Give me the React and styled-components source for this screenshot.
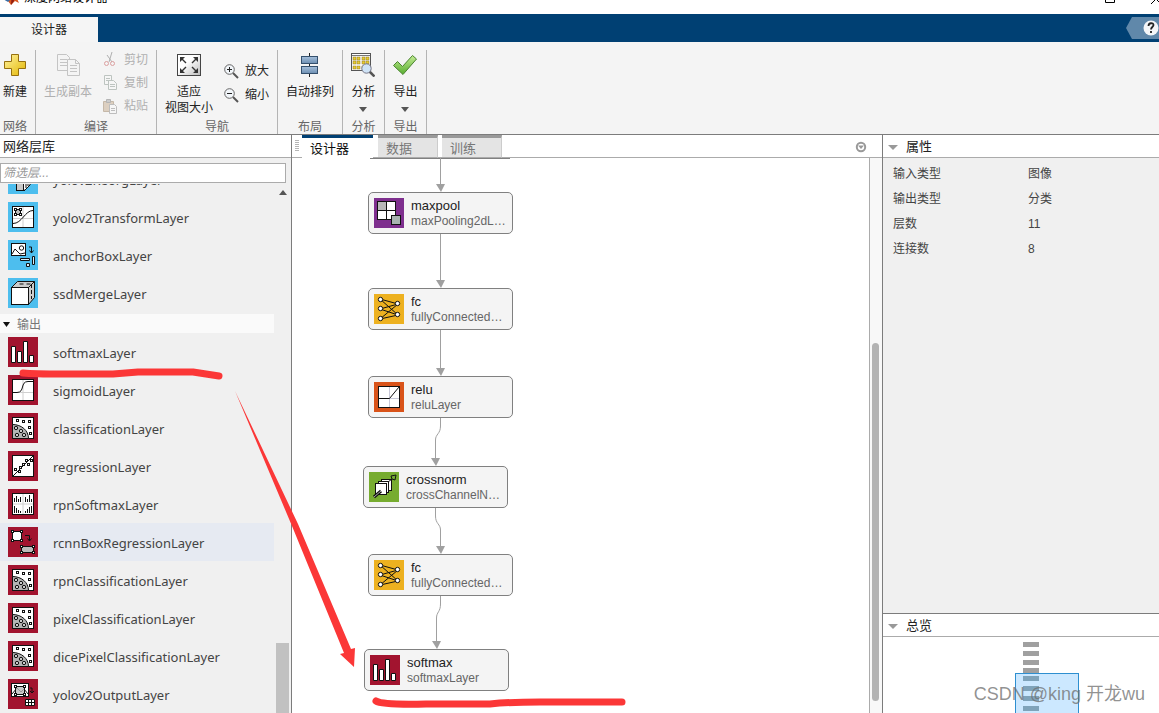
import React from "react";
import styled, { createGlobalStyle } from "styled-components";

const cjk = `"Noto Sans CJK SC"`;
const uiFont = `"Liberation Sans", ${cjk}, sans-serif`;

const GlobalStyle = createGlobalStyle`
  * { box-sizing: border-box; }
  body { margin: 0; background: #fff; font-family: ${uiFont}; font-size: 12px; line-height: 16px; color: #222; }
  button, input { font: inherit; color: inherit; }
  button { border: 0; padding: 0; margin: 0; background: none; cursor: pointer; }
  svg { display: block; flex: none; }
  h1, h2, p, ul { margin: 0; padding: 0; font-size: inherit; font-weight: inherit; list-style: none; }
`;

const Window = styled.div`
  position: relative;
  height: 100vh;
  display: flex;
  flex-direction: column;
  overflow: hidden;
`;

/* ---------- title bar and ribbon ---------- */

const TitleBar = styled.header`
  height: 14px;
  flex: none;
  overflow: hidden;
  background: #fff;
`;

const TitleRow = styled.div`
  display: flex;
  align-items: center;
  gap: 5px;
  height: 16px;
  margin-top: -10px;
  padding-left: 3px;
  color: #000;
`;

const WindowControls = styled.div`
  display: flex;
  margin-left: auto;
  overflow: hidden;
`;

const RibbonTabs = styled.div`
  display: flex;
  align-items: flex-start;
  justify-content: space-between;
  flex: none;
  height: 28px;
  padding-top: 3px;
  background: #004073;
`;

const RibbonTab = styled.button`
  width: 98px;
  height: 25px;
  background: #f5f5f5;
  color: #222;
`;

const Ribbon = styled.div`
  display: flex;
  flex: none;
  height: 93px;
  background: #f4f4f4;
  border-bottom: 1px solid #7c7c7c;
`;

const Group = styled.section`
  display: flex;
  flex-direction: column;
  width: ${(p) => p.$width}px;
  padding-right: ${(p) => (p.$first ? 5 : 0)}px;
`;

const Separator = styled.div`
  width: 1px;
  margin-top: 8px;
  background: #b4b4b4;
`;

const GroupBody = styled.div`
  display: flex;
  justify-content: center;
  gap: ${(p) => p.$gap || 0}px;
  height: 76px;
`;

const GroupName = styled.h2`
  height: 16px;
  line-height: 19px;
  text-align: center;
  color: #666;
  overflow: hidden;
`;

const BigButton = styled.button`
  display: flex;
  flex-direction: column;
  align-items: center;
  padding-top: 11px;
  gap: 7px;
  white-space: pre-line;
  color: #222;
  &:disabled { color: #b0b0b0; }
`;

const SmallColumn = styled.div`
  display: flex;
  flex-direction: column;
  padding-top: ${(p) => p.$top}px;
`;

const SmallButton = styled.button`
  display: flex;
  align-items: center;
  gap: 6px;
  height: 24px;
  color: #222;
  &:disabled { color: #b0b0b0; }
`;

/* ---------- main area ---------- */

const Main = styled.main`
  display: grid;
  grid-template-columns: 292px minmax(0, 1fr) 276px;
  flex: 1;
  min-height: 0;
`;

const Panel = styled.section`
  display: flex;
  flex-direction: column;
  min-height: 0;
  min-width: 0;
  background: #f0f0f0;
  border-right: ${(p) => (p.$edge ? "1px solid #7c7c7c" : "0")};
`;

const PanelHeader = styled.h2`
  display: flex;
  align-items: center;
  gap: 8px;
  flex: none;
  height: 23px;
  padding: 2px 0 0 ${(p) => p.$indent}px;
  background: #fff;
  border-bottom: 1px solid #ababab;
  font-size: 13px;
  color: #222;
`;

const Filter = styled.input`
  flex: none;
  height: 20px;
  margin: 5px 5px 1px 0;
  padding: 0 2px;
  border: 1px solid #ababab;
  background: #fff;
  outline: 0;
  font-size: 12px;
  &::placeholder { color: #999; font-style: italic; opacity: 1; }
`;

const Library = styled.div`
  display: flex;
  flex: 1;
  min-height: 0;
  overflow: hidden;
`;

const LayerList = styled.ul`
  flex: 1;
  margin-top: -24px;
`;

const LayerRow = styled.button`
  display: flex;
  align-items: center;
  gap: 15px;
  width: 100%;
  height: 38px;
  padding-left: 8px;
  background: ${(p) => (p.$hover ? "#e6eaf2" : "transparent")};
  font-family: "Noto Sans", ${cjk}, sans-serif;
  font-size: 13px;
  color: #444;
  text-align: left;
`;

const LayerName = styled.span`
  padding-top: 2px;
`;

const CategoryRow = styled.button`
  display: flex;
  align-items: center;
  gap: 7px;
  width: 100%;
  height: 21px;
  padding: 2px 0 0 3px;
  background: #fafafa;
  border-top: 2px solid #f0f0f0;
  color: #777;
`;

const ListScroll = styled.div`
  display: flex;
  flex-direction: column;
  justify-content: space-between;
  align-items: center;
  flex: none;
  width: 17px;
  padding: 6px 2px 0;
`;

const ListThumb = styled.div`
  align-self: stretch;
  height: 70px;
  background: #c1c1c1;
`;

/* ---------- designer ---------- */

const TabBar = styled.div`
  display: flex;
  flex: none;
  height: 23px;
  background: linear-gradient(#ababab, #ababab) bottom / 100% 1px no-repeat, #fff;
`;

const Grip = styled.div`
  width: 10px;
  padding: 5px 0 0 3px;
`;

const DocTab = styled.button`
  width: ${(p) => (p.$active ? 71 : 60)}px;
  margin-right: ${(p) => (p.$active ? 5 : 4)}px;
  padding: 2px 8px 0;
  border-top: 3px solid ${(p) => (p.$active ? "#004073" : "#999")};
  border-right: ${(p) => (p.$active ? "0" : "1px solid #ccc")};
  border-bottom: ${(p) => (p.$active ? "0" : "1px solid #ababab")};
  background: ${(p) => (p.$active ? "#fff" : "#e4e4e4")};
  color: ${(p) => (p.$active ? "#111" : "#777")};
  font-size: 13px;
  text-align: left;
  white-space: nowrap;
`;

const TabMenu = styled.button`
  margin: 0 15px 0 auto;
`;

const CanvasRow = styled.div`
  display: flex;
  flex: 1;
  min-height: 0;
`;

const Canvas = styled.div`
  position: relative;
  flex: 1;
  overflow: hidden;
  background: #fff;
`;

const Wires = styled.svg`
  position: absolute;
  left: 0;
  top: 0;
`;

const Node = styled.button`
  position: absolute;
  left: ${(p) => p.$x}px;
  top: ${(p) => p.$y}px;
  display: flex;
  align-items: center;
  gap: 7px;
  width: 145px;
  height: 42px;
  padding: 0 6px 0 5px;
  border: 1px solid #808080;
  border-radius: 5px;
  background: #f4f4f4;
  text-align: left;
`;

const NodeText = styled.span`
  display: flex;
  flex-direction: column;
  min-width: 0;
  padding-top: 1px;
`;

const NodeName = styled.span`
  font-size: 13px;
  line-height: 15px;
  color: #222;
`;

const NodeType = styled.span`
  font-size: 12px;
  line-height: 16px;
  color: #666;
  white-space: nowrap;
`;

const CanvasScroll = styled.div`
  display: flex;
  flex-direction: column;
  justify-content: flex-end;
  width: 13px;
  padding: 0 3px 12px 2px;
  border-left: 1px solid #ababab;
  background: #f8f8f8;
`;

const CanvasThumb = styled.div`
  height: 66%;
  border-radius: 4px;
  background: #b3b3b3;
`;

/* ---------- right column ---------- */

const PropertyArea = styled.div`
  flex: 1;
  padding: 3px 10px;
  border-bottom: 1px solid #7c7c7c;
`;

const PropertyTable = styled.table`
  width: 100%;
  border-collapse: collapse;
  table-layout: fixed;
  th, td { height: 25px; padding: 0; font-weight: normal; text-align: left; color: #444; }
  th { width: 135px; }
`;

const Overview = styled.div`
  flex: none;
  height: 76px;
  overflow: hidden;
  background: #fff;
`;

const Watermark = styled.p`
  position: absolute;
  right: 14px;
  bottom: 7px;
  font-size: 18px;
  line-height: 24px;
  color: rgba(110, 110, 110, 0.75);
  white-space: nowrap;
`;

const Markup = styled.svg`
  position: absolute;
  left: 0;
  top: 0;
  pointer-events: none;
`;

/* ---------- layer glyphs, all on a 30 unit tile ---------- */

const Ink = ({ children, ...rest }) => (
  <g stroke="#111" fill="#fff" strokeWidth="1" {...rest}>{children}</g>
);

const dots = (points, s = 2) =>
  points.map(([x, y]) => <rect key={`${x}-${y}`} x={x} y={y} width={s} height={s} />);

const glyphs = {
  reorg: (
    <Ink>
      <path d="M9 11l6-5h8v13l-6 7H9z" />
      <rect x="8.500" y="19.500" width="7" height="7" fill="#c8c8c8" />
      <path d="M16 27l6-6v-9M18 24v-6M20 22v-6" />
    </Ink>
  ),
  transform: (
    <Ink>
      <rect x="4.500" y="4.500" width="21" height="21" />
      <path d="M15 5v20M5 16.500h20" stroke="#d0d0d0" />
      <path d="M5 21.500c9 0 12-13 20-13" fill="none" />
      <rect x="7.500" y="7.500" width="5" height="5" fill="#bbb" />
      {dots([[6.500, 6.500], [11.500, 6.500], [6.500, 11.500], [11.500, 11.500]])}
    </Ink>
  ),
  anchor: (
    <Ink>
      <rect x="3.500" y="3.500" width="14" height="12" />
      <path d="M4 14l3-5 3 3 2 2 5-1" fill="none" />
      <circle cx="13.500" cy="8" r="2.200" />
      <path d="M21 7h2.500v6M21.500 10.500l2 2.500 2-2.500" fill="none" />
      <path d="M12.500 18.500h9v2h-9zM18.500 23.500h3v3h-3zM24.500 16.500h2v8h-2z" fill="#d8eefa" />
    </Ink>
  ),
  merge: (
    <Ink>
      <path d="M3.500 9.500l6-6h17v16l-6 7z" fill="#ccc" />
      <path d="M11.500 6h4M18.500 6h4M23.500 7v3M23.500 12v4M23.500 18v3" fill="none" />
      <rect x="3.500" y="9.500" width="17" height="17" />
      <path d="M20.500 9.500l6-6" />
    </Ink>
  ),
  bars: (
    <Ink>
      <path d="M3.500 9.500h4v16h-4zM9.500 14.500h4v11h-4zM15.500 4.500h4v21h-4zM21.500 18.500h4v7h-4z" />
    </Ink>
  ),
  sigmoid: (
    <Ink>
      <rect x="4.500" y="4.500" width="21" height="21" />
      <path d="M15 5v20M5 17.500h20" stroke="#d0d0d0" />
      <path d="M5 17.500h4c8 0 3-11 11-11h5" fill="none" />
    </Ink>
  ),
  classify: (
    <Ink>
      <rect x="4.500" y="4.500" width="21" height="21" />
      <path d="M4.500 11.500c9 0 16 6 16 14h-16z" fill="#b5b5b5" />
      {dots([[8.500, 6.500], [14.500, 7.500], [20.500, 7.500], [20.500, 13.500], [21.500, 19.500]])}
      <g fill="#ccc">
        <circle cx="8" cy="15" r="1.700" />
        <circle cx="13" cy="18" r="1.700" />
        <circle cx="9" cy="22" r="1.700" />
        <circle cx="16" cy="22" r="1.700" />
      </g>
    </Ink>
  ),
  regress: (
    <Ink>
      <rect x="4.500" y="4.500" width="21" height="21" />
      <path d="M5 25L25 5" />
      {dots([[6.500, 17.500], [10.500, 19.500], [11.500, 15.500], [14.500, 12.500], [17.500, 8.500], [19.500, 12.500], [22.500, 8.500]])}
    </Ink>
  ),
  rpnSoftmax: (
    <Ink>
      <rect x="4.500" y="4.500" width="21" height="21" />
      <path d="M15 5v20M5 15h20" stroke="#d0d0d0" />
      <path d="M6.500 13V9M8.500 13V7M10.500 13v-3M12.500 13V8M17.500 13V8M19.500 13v-3M21.500 13V6M23.500 13v-3M6.500 24v-7M8.500 24v-5M10.500 24v-3M12.500 24v-2M17.500 24v-2M19.500 24v-4M21.500 24v-6M23.500 24v-7" />
    </Ink>
  ),
  boxRegress: (
    <Ink>
      <rect x="4.500" y="4.500" width="9" height="9" />
      {dots([[3.500, 3.500], [12.500, 3.500], [3.500, 12.500], [12.500, 12.500]])}
      <path d="M17 8.500h4.500v5M19.500 11.500l2 2.500 2-2.500" fill="none" />
      <rect x="13.500" y="19.500" width="12" height="6" fill="#bbb" />
      {dots([[12.500, 18.500], [24.500, 18.500], [12.500, 24.500], [24.500, 24.500]])}
    </Ink>
  ),
  yoloOut: (
    <Ink>
      <rect x="3.500" y="4.500" width="17" height="13" />
      <path d="M4 15l5-6 4 4 3-3 4 5" fill="none" />
      <rect x="7.500" y="7.500" width="9" height="8" fill="#bbb" fillOpacity="0.800" />
      {dots([[6.500, 6.500], [15.500, 6.500], [6.500, 14.500], [15.500, 14.500]])}
      <path d="M22 9h2v5M22 12l2 2 2-2" fill="none" />
      <path d="M17.500 20.500h9v6h-9zM17.500 23.500h9M20.500 20.500v6M23.500 20.500v6" />
    </Ink>
  ),
  pool: (
    <Ink>
      <rect x="3.500" y="3.500" width="18" height="18" />
      <rect x="3.500" y="3.500" width="9" height="9" fill="#b8b8b8" />
      <path d="M12.500 3.500v18M3.500 12.500h18" />
      <rect x="17.500" y="17.500" width="9" height="9" fill="#a8b4b0" />
    </Ink>
  ),
  full: (
    <Ink>
      <path d="M6 5l18 5M6 5l18 16M6 15l18-5M6 15l18 6M6 25l18-15M6 25l18-4" />
      {[[6.500, 5.500], [6.500, 14.500], [6.500, 24.500], [23.500, 9.500], [23.500, 20.500]].map(([x, y]) => (
        <circle key={`${x}-${y}`} cx={x} cy={y} r="2.200" />
      ))}
    </Ink>
  ),
  relu: (
    <Ink>
      <rect x="4.500" y="4.500" width="21" height="21" />
      <path d="M15.500 5v20M5 16.500h20" stroke="#c8c8d8" />
      <path d="M4.500 16.500h11L25 5" fill="none" />
    </Ink>
  ),
  cross: (
    <Ink>
      <rect x="12.500" y="7.500" width="10" height="11" />
      <rect x="9.500" y="9.500" width="10" height="11" />
      <rect x="6.500" y="11.500" width="11" height="11" />
      <path d="M5 25l7-6" strokeWidth="3" />
      <path d="M5 25l7-6" stroke="#aaa" />
      <path d="M19 10l4-3M22 4l5-1-1 5-3-1z" fill="#75ac31" />
    </Ink>
  ),
};

const Tile = ({ color, glyph }) => (
  <svg width="30" height="30" viewBox="0 0 30 30" aria-hidden="true">
    <rect width="30" height="30" fill={color} />
    {glyphs[glyph]}
  </svg>
);

/* ---------- ribbon icons ---------- */

const Icon = ({ size = 24, children }) => (
  <svg width={size} height={size} viewBox={`0 0 ${size} ${size}`} aria-hidden="true">{children}</svg>
);

const PlusIcon = () => (
  <Icon>
    <defs>
      <linearGradient id="gold" x1="0" y1="0" x2="1" y2="1">
        <stop offset="0" stopColor="#fff3a0" />
        <stop offset="1" stopColor="#e2b500" />
      </linearGradient>
    </defs>
    <path d="M8.500 1.500h7v7h7v7h-7v7h-7v-7h-7v-7h7z" fill="url(#gold)" stroke="#96700f" />
  </Icon>
);

const DuplicateIcon = () => (
  <Icon>
    <g fill="#f4f4f4" stroke="#c4c4c4">
      <path d="M1.500 1.500h9l3 3v13h-12zM4 6.500h7M4 9.500h7M4 12.500h7" />
      <path d="M11.500 6.500h8l4 4v12h-12zM19.500 6.500v4h4M14 12.500h7M14 15.500h7M14 18.500h7" />
    </g>
  </Icon>
);

const CutIcon = () => (
  <Icon size={15}>
    <path d="M9 0L6 10M4 3l5 7" stroke="#b0b0b0" fill="none" />
    <circle cx="3.500" cy="11.500" r="2" fill="none" stroke="#dba0a0" />
    <circle cx="9.500" cy="11.500" r="2" fill="none" stroke="#dba0a0" />
  </Icon>
);

const CopyIcon = () => (
  <Icon size={15}>
    <g fill="#f6f6f6" stroke="#bdc4c0">
      <path d="M1.500 0.500h7v9h-7zM3 3.500h4M3 5.500h4" />
      <path d="M5.500 5.500h5l3 3v6h-8zM7 9.500h5M7 11.500h5" />
    </g>
  </Icon>
);

const PasteIcon = () => (
  <Icon size={15}>
    <path d="M0.500 2.500h10v10h-10z" fill="#dccfc0" stroke="#c5b8a8" />
    <path d="M3.500 0.500h4v3h-4z" fill="#ccc" stroke="#b5b5b5" />
    <path d="M6.500 5.500h5l2 2v7h-7zM8 9.500h4M8 11.500h4" fill="#f6f6f6" stroke="#bdbdbd" />
  </Icon>
);

const FitIcon = () => (
  <Icon>
    <defs>
      <linearGradient id="steel" x1="0" y1="0" x2="1" y2="1">
        <stop offset="0.400" stopColor="#fff" />
        <stop offset="1" stopColor="#bbb" />
      </linearGradient>
    </defs>
    <rect x="0.500" y="1.500" width="23" height="21" fill="url(#steel)" stroke="#444" />
    <path d="M5 6l4 4M19 6l-4 4M5 18l4-4M19 18l-4-4" stroke="#333" strokeWidth="1.400" />
    <path d="M3 4h5L3 9zM21 4h-5l5 5zM3 20h5l-5-5zM21 20h-5l5-5z" fill="#333" />
  </Icon>
);

const ZoomIcon = ({ plus }) => (
  <Icon size={15}>
    <path d="M9 9l5 5" stroke="#555" strokeWidth="2" />
    <circle cx="5.500" cy="5.500" r="4.800" fill="#f2f6fa" stroke="#666" />
    <path d={plus ? "M3 5.500h5M5.500 3v5" : "M3 5.500h5"} stroke="#222" />
  </Icon>
);

const ArrangeIcon = () => (
  <Icon>
    <defs>
      <linearGradient id="block" x1="0" y1="0" x2="0" y2="1">
        <stop offset="0" stopColor="#a5bfdb" />
        <stop offset="1" stopColor="#6d8fb2" />
      </linearGradient>
    </defs>
    <path d="M11.500 0v24" stroke="#222" />
    <rect x="3.500" y="3.500" width="16" height="7" fill="url(#block)" stroke="#34506d" />
    <rect x="3.500" y="13.500" width="16" height="7" fill="url(#block)" stroke="#34506d" />
  </Icon>
);

const AnalyzeIcon = () => (
  <Icon>
    <rect x="0.500" y="0.500" width="19" height="17" fill="#fff" stroke="#555" />
    <path d="M1 2.500h18" stroke="#777" />
    <g fill="#e8cc30" stroke="#8a7420" strokeWidth="0.500">
      {[2, 6, 11, 15].flatMap((x) => [4, 8, 13].map((y) => (
        <rect key={`${x}-${y}`} x={x} y={y} width="3" height="3" />
      )))}
    </g>
    <path d="M18.500 18.500l5 5" stroke="#555" strokeWidth="2.500" />
    <circle cx="15.500" cy="15.500" r="4.700" fill="#cfe3f6" stroke="#778" />
  </Icon>
);

const CheckIcon = () => (
  <Icon>
    <defs>
      <linearGradient id="leaf" x1="0" y1="0" x2="0" y2="1">
        <stop offset="0" stopColor="#c4ec94" />
        <stop offset="1" stopColor="#58ad30" />
      </linearGradient>
    </defs>
    <path d="M0.500 12.500l4-4 5 5L19.500 2.500l4 3.500L10 21.500z" fill="url(#leaf)" stroke="#4a8430" />
  </Icon>
);

const Caret = ({ color = "#555", up = false, w = 8 }) => (
  <svg width={w} height="5" viewBox="0 0 8 5" preserveAspectRatio="none" aria-hidden="true">
    <path d={up ? "M0 5h8L4 0z" : "M0 0h8L4 5z"} fill={color} />
  </svg>
);

const MatlabLogo = () => (
  <svg width="16" height="16" viewBox="0 0 16 16" aria-hidden="true">
    <path d="M0 9l5-2 5-7 6 13-4-2-4 4-3-4z" fill="#d9541e" />
    <path d="M0 9l5-2 2 3-2 2z" fill="#3a6ea5" />
    <path d="M9 2l2 9-3 4z" fill="#8c1d12" />
  </svg>
);

/* ---------- data ---------- */

const SKY = "#4dbeee";
const WINE = "#a2142f";

const convLayers = [
  ["yolov2ReorgLayer", "reorg"],
  ["yolov2TransformLayer", "transform"],
  ["anchorBoxLayer", "anchor"],
  ["ssdMergeLayer", "merge"],
];

const outputLayers = [
  ["softmaxLayer", "bars"],
  ["sigmoidLayer", "sigmoid"],
  ["classificationLayer", "classify"],
  ["regressionLayer", "regress"],
  ["rpnSoftmaxLayer", "rpnSoftmax"],
  ["rcnnBoxRegressionLayer", "boxRegress"],
  ["rpnClassificationLayer", "classify"],
  ["pixelClassificationLayer", "classify"],
  ["dicePixelClassificationLayer", "classify"],
  ["yolov2OutputLayer", "yoloOut"],
];

const nodes = [
  { x: 76, y: 34, name: "maxpool", type: "maxPooling2dL…", glyph: "pool", color: "#7e2f8e" },
  { x: 76, y: 130, name: "fc", type: "fullyConnected…", glyph: "full", color: "#edb120" },
  { x: 76, y: 218, name: "relu", type: "reluLayer", glyph: "relu", color: "#d95319" },
  { x: 71, y: 308, name: "crossnorm", type: "crossChannelN…", glyph: "cross", color: "#77ac30" },
  { x: 76, y: 396, name: "fc", type: "fullyConnected…", glyph: "full", color: "#edb120" },
  { x: 72, y: 491, name: "softmax", type: "softmaxLayer", glyph: "bars", color: WINE },
];

const wires = [
  ["M148.500 0v28", 148, 34],
  ["M148.500 76v48", 148, 130],
  ["M148.500 172v40", 148, 218],
  ["M148.500 260v8c0 8-5 8-5 14v20", 143, 308],
  ["M143.500 350v8c0 8 5 8 5 14v20", 148, 396],
  ["M148.500 438v8c0 8-4 8-4 14v25", 144, 491],
];

const properties = [
  ["输入类型", "图像"],
  ["输出类型", "分类"],
  ["层数", "11"],
  ["连接数", "8"],
];

const LayerItems = ({ items, color }) =>
  items.map(([name, glyph]) => (
    <li key={name}>
      <LayerRow $hover={name === "rcnnBoxRegressionLayer"}>
        <Tile color={color} glyph={glyph} />
        <LayerName>{name}</LayerName>
      </LayerRow>
    </li>
  ));

export default function App() {
  return (
    <Window>
      <GlobalStyle />
      <TitleBar>
        <TitleRow>
          <MatlabLogo />
          <h1>深度网络设计器</h1>
          <WindowControls>
            <svg width="54" height="16" viewBox="0 0 54 16" aria-hidden="true">
              <path d="M0.500 3.500h9v9h-9zM46 14L56 4M46 4l10 10" fill="none" stroke="#000" />
            </svg>
          </WindowControls>
        </TitleRow>
      </TitleBar>

      <RibbonTabs>
        <RibbonTab>设计器</RibbonTab>
        <button aria-label="帮助">
          <svg width="33" height="22" viewBox="0 0 33 22">
            <path d="M0 11L6 0h27v22H6z" fill="#6088aa" />
            <circle cx="25" cy="11" r="7.500" fill="#f4f6f8" />
            <path d="M22.500 9c0-3.500 5-3.500 5-1 0 2-2.500 2-2.500 4.500M25 14v2" fill="none" stroke="#222" strokeWidth="1.800" />
          </svg>
        </button>
      </RibbonTabs>

      <Ribbon>
        <Group $width={35} $first>
          <GroupBody>
            <BigButton><PlusIcon />新建</BigButton>
          </GroupBody>
          <GroupName>网络</GroupName>
        </Group>
        <Separator />
        <Group $width={120}>
          <GroupBody $gap={11}>
            <BigButton disabled><DuplicateIcon />生成副本</BigButton>
            <SmallColumn $top={6}>
              <SmallButton disabled><CutIcon />剪切</SmallButton>
              <SmallButton disabled><CopyIcon />复制</SmallButton>
              <SmallButton disabled><PasteIcon />粘贴</SmallButton>
            </SmallColumn>
          </GroupBody>
          <GroupName>编译</GroupName>
        </Group>
        <Separator />
        <Group $width={120}>
          <GroupBody $gap={11}>
            <BigButton><FitIcon />{"适应\n视图大小"}</BigButton>
            <SmallColumn $top={17}>
              <SmallButton><ZoomIcon plus />放大</SmallButton>
              <SmallButton><ZoomIcon />缩小</SmallButton>
            </SmallColumn>
          </GroupBody>
          <GroupName>导航</GroupName>
        </Group>
        <Separator />
        <Group $width={64}>
          <GroupBody>
            <BigButton><ArrangeIcon />自动排列</BigButton>
          </GroupBody>
          <GroupName>布局</GroupName>
        </Group>
        <Separator />
        <Group $width={41}>
          <GroupBody>
            <BigButton><AnalyzeIcon />分析<Caret /></BigButton>
          </GroupBody>
          <GroupName>分析</GroupName>
        </Group>
        <Separator />
        <Group $width={41}>
          <GroupBody>
            <BigButton><CheckIcon />导出<Caret /></BigButton>
          </GroupBody>
          <GroupName>导出</GroupName>
        </Group>
        <Separator />
      </Ribbon>

      <Main>
        <Panel $edge>
          <PanelHeader $indent={3}>网络层库</PanelHeader>
          <Filter type="text" aria-label="筛选层" placeholder="筛选层..." />
          <Library>
            <LayerList>
              <LayerItems items={convLayers} color={SKY} />
              <li>
                <CategoryRow><Caret color="#111" w={7} />输出</CategoryRow>
              </li>
              <LayerItems items={outputLayers} color={WINE} />
            </LayerList>
            <ListScroll>
              <Caret up />
              <ListThumb />
            </ListScroll>
          </Library>
        </Panel>

        <Panel $edge>
          <TabBar>
            <Grip>
              <svg width="5" height="12" viewBox="0 0 5 12" aria-hidden="true">
                <path d="M0 0.500h4M0 2.500h4M0 4.500h4M0 6.500h4M0 8.500h4M0 10.500h4" stroke="#b5b5b5" />
              </svg>
            </Grip>
            <DocTab $active>设计器</DocTab>
            <DocTab>数据</DocTab>
            <DocTab>训练</DocTab>
            <TabMenu aria-label="选项">
              <svg width="12" height="12" viewBox="0 0 12 12">
                <circle cx="6" cy="6" r="4.200" fill="#fff" stroke="#999" strokeWidth="2" />
                <path d="M3 4.500h6L6 8z" fill="#999" />
              </svg>
            </TabMenu>
          </TabBar>
          <CanvasRow>
            <Canvas>
              <Wires width="300" height="560" viewBox="0 0 300 560" aria-hidden="true">
                <path d="M78 0.500h140" stroke="#808080" />
                {wires.map(([d, x, y]) => (
                  <g key={d}>
                    <path d={d} fill="none" stroke="#a0a0a0" />
                    <path d={`M${x - 4} ${y - 8}h9l-4 8z`} fill="#a0a0a0" />
                  </g>
                ))}
              </Wires>
              {nodes.map((n) => (
                <Node key={`${n.name}-${n.y}`} $x={n.x} $y={n.y}>
                  <Tile color={n.color} glyph={n.glyph} />
                  <NodeText>
                    <NodeName>{n.name}</NodeName>
                    <NodeType>{n.type}</NodeType>
                  </NodeText>
                </Node>
              ))}
            </Canvas>
            <CanvasScroll><CanvasThumb /></CanvasScroll>
          </CanvasRow>
        </Panel>

        <Panel>
          <PanelHeader $indent={5}><Caret color="#999" w={10} />属性</PanelHeader>
          <PropertyArea>
            <PropertyTable>
              <tbody>
                {properties.map(([name, value]) => (
                  <tr key={name}>
                    <th scope="row">{name}</th>
                    <td>{value}</td>
                  </tr>
                ))}
              </tbody>
            </PropertyTable>
          </PropertyArea>
          <PanelHeader $indent={5}><Caret color="#999" w={10} />总览</PanelHeader>
          <Overview>
            <svg width="276" height="77" viewBox="0 0 276 77" role="img" aria-label="总览">
              <rect x="132.500" y="36.500" width="63" height="60" fill="#cce8ff" stroke="#2e8fd0" />
              {[5, 14, 23, 31, 39, 49, 59, 69].map((y, i) => (
                <rect key={y} x="140" y={y} width="16" height="5" fill={i < 4 ? "#a0a0a0" : "#7fa3ba"} />
              ))}
            </svg>
          </Overview>
        </Panel>
      </Main>

      <Watermark>CSDN @king 开龙wu</Watermark>
      <Markup width="640" height="713" viewBox="0 0 640 713" aria-hidden="true">
        <g fill="none" stroke="#fb3737" strokeWidth="7" strokeLinecap="round" strokeLinejoin="round">
          <path d="M23 373q10 1 40 1h50q12-1 25-2h55l26 4" />
          <path d="M376 701q6 4 50 3h64q20-2 50-2h82" />
        </g>
        <path d="M235 391L298 524 351 649l4-1-1 19-14-13 4-1L292 526z" fill="#fb3737" />
      </Markup>
    </Window>
  );
}
